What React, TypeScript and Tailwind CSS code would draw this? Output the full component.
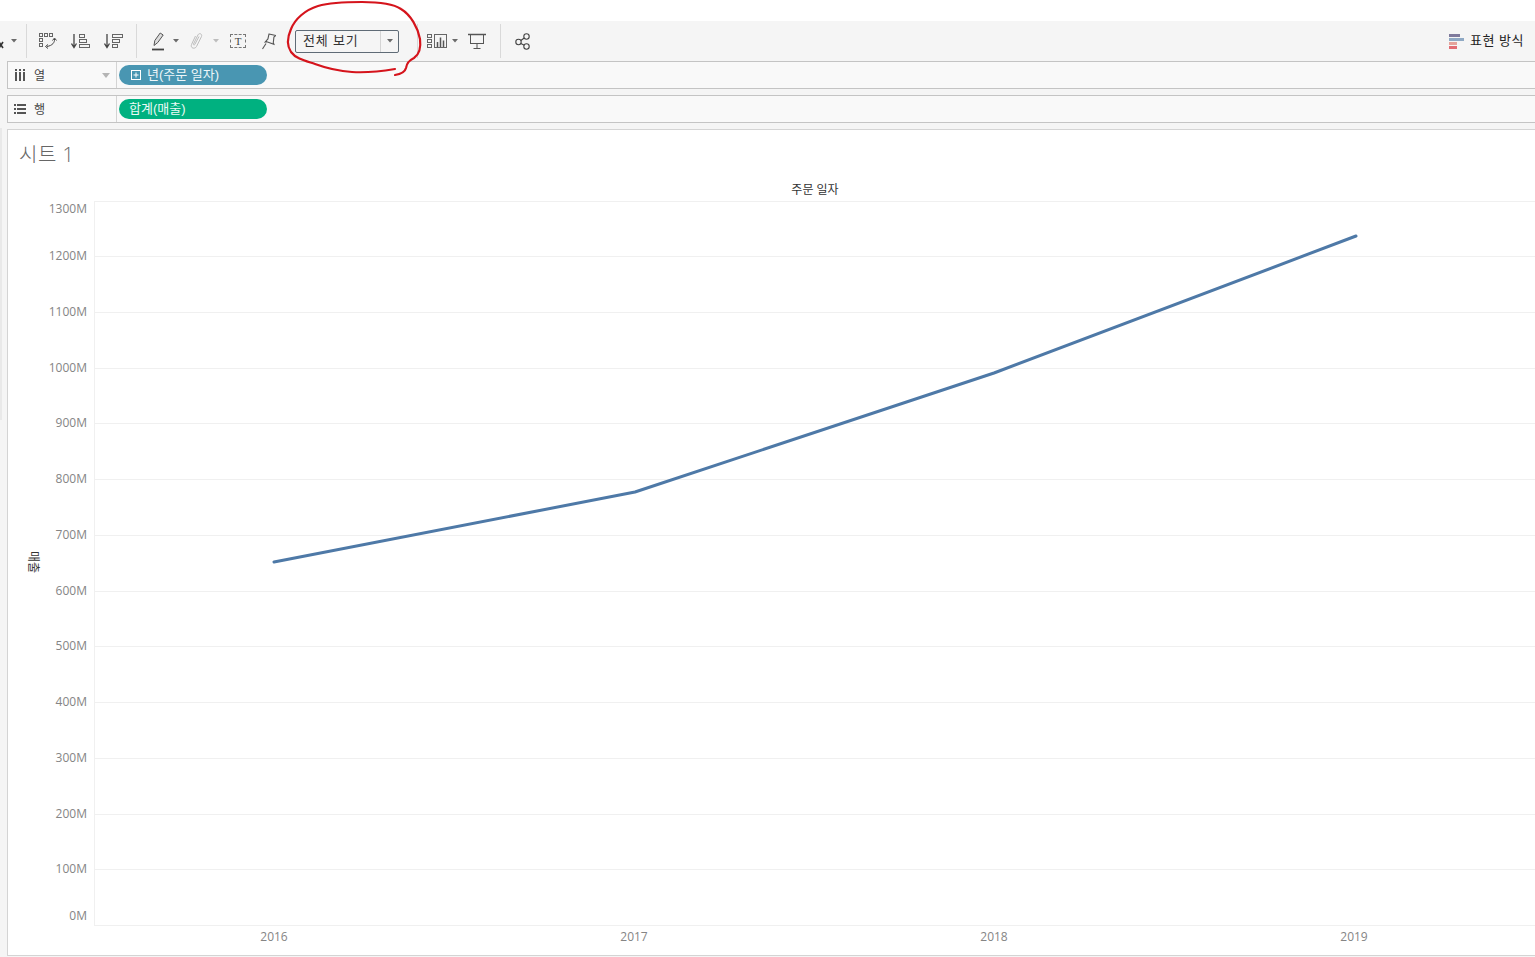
const font = "[font-family:'Liberation_Sans','Noto_Sans_CJK_KR',sans-serif]";

const yTicks = [
  { label: "1300M", grid: 201, text: 209 },
  { label: "1200M", grid: 256, text: 256 },
  { label: "1100M", grid: 312, text: 312 },
  { label: "1000M", grid: 368, text: 368 },
  { label: "900M", grid: 423, text: 423 },
  { label: "800M", grid: 479, text: 479 },
  { label: "700M", grid: 535, text: 535 },
  { label: "600M", grid: 591, text: 591 },
  { label: "500M", grid: 646, text: 646 },
  { label: "400M", grid: 702, text: 702 },
  { label: "300M", grid: 758, text: 758 },
  { label: "200M", grid: 814, text: 814 },
  { label: "100M", grid: 869, text: 869 },
  { label: "0M", grid: 925, text: 916 },
];

const years = [
  { label: "2016", x: 274 },
  { label: "2017", x: 634 },
  { label: "2018", x: 994 },
  { label: "2019", x: 1354 },
];

function Caret({ className = "" }: { className?: string }) {
  return (
    <svg width="6" height="4" viewBox="0 0 6 4" className={className}>
      <path d="M0 0h6L3 3.500z" fill="#6b6b6b" />
    </svg>
  );
}

function Divider({ className = "" }: { className?: string }) {
  return <div className={`w-px h-[34px] bg-[#d9d9d9] ${className}`} />;
}

function Cross() {
  return (
    <svg width="4" height="8" viewBox="0 0 4 8" className="mt-[8px]">
      <path d="M-1 1l4 6M3 1l-4 6" stroke="#333" strokeWidth="1.600" fill="none" />
    </svg>
  );
}

function SwapIcon() {
  return (
    <svg width="18" height="18" viewBox="0 0 18 18" fill="none" stroke="#666" strokeWidth="1">
      <rect x="0.500" y="1.500" width="3" height="3" />
      <rect x="5.500" y="1.500" width="3" height="3" />
      <rect x="10.500" y="1.500" width="3" height="3" />
      <rect x="0.500" y="6.500" width="3" height="3" />
      <rect x="0.500" y="11.500" width="3" height="3" />
      <path d="M15.500 7c.3 3.500-2 6.500-7.500 7.500" stroke="#444" />
      <path d="M9 12.500l-2.500 2 2.500 2M13.500 8.500l2-2.500 2 2.500" stroke="#444" />
    </svg>
  );
}

function SortAsc() {
  return (
    <svg width="19" height="18" viewBox="0 0 19 18" fill="none" stroke="#666" strokeWidth="1">
      <path d="M3 2v13M0.500 11.500L3 15.500l2.500-4" stroke="#444" strokeWidth="1.300" />
      <rect x="8.500" y="2.500" width="5" height="3" />
      <rect x="8.500" y="7.500" width="7" height="3" />
      <rect x="8.500" y="12.500" width="10" height="3" />
    </svg>
  );
}

function SortDesc() {
  return (
    <svg width="19" height="18" viewBox="0 0 19 18" fill="none" stroke="#666" strokeWidth="1">
      <path d="M3 2v13M0.500 11.500L3 15.500l2.500-4" stroke="#444" strokeWidth="1.300" />
      <rect x="8.500" y="2.500" width="10" height="3" />
      <rect x="8.500" y="7.500" width="7" height="3" />
      <rect x="8.500" y="12.500" width="5" height="3" />
    </svg>
  );
}

function Pen() {
  return (
    <svg width="16" height="20" viewBox="0 0 16 20" fill="none">
      <path d="M3 14.500l.8-5 5.400-7.500 3 2-5.400 7.500z" fill="#dcdcdc" stroke="#555" strokeWidth="1" />
      <path d="M1 18.500h12" stroke="#444" strokeWidth="1.800" />
    </svg>
  );
}

function Clip() {
  return (
    <svg width="14" height="18" viewBox="0 0 14 18" fill="none" stroke="#bdbdbd" strokeWidth="1">
      <path d="M4.500 12L9 2.800c1.300-2.300 4.500-.8 3.500 1.700L7.500 14.500c-1.500 3-6.500 1.800-5-2L6.500 4" />
      <path d="M4.500 12c-.5 1 .8 1.500 1.300.5L10 4.500" />
    </svg>
  );
}

function Pin() {
  return (
    <svg width="16" height="17" viewBox="0 0 16 17" fill="none" stroke="#555" strokeWidth="1.100">
      <path d="M7.500 1h7L13 3l.5 5.500 1 1.500-7.500-1-1.500.5L7.500 6z" transform="rotate(12 8 8)" />
      <path d="M6 10.500L2.500 16" />
    </svg>
  );
}

function ShowMe() {
  return (
    <svg width="21" height="16" viewBox="0 0 21 16" fill="none" stroke="#666" strokeWidth="1">
      <rect x="0.500" y="1.500" width="4" height="3" />
      <rect x="0.500" y="6.500" width="4" height="3" />
      <rect x="0.500" y="11.500" width="4" height="3" />
      <rect x="7.500" y="1.500" width="12" height="13" />
      <path d="M10.500 14V9M13.500 14V4.500M16.500 14V7.500" stroke="#555" strokeWidth="1.500" />
    </svg>
  );
}

function Present() {
  return (
    <svg width="18" height="17" viewBox="0 0 18 17" fill="none" stroke="#555" strokeWidth="1">
      <path d="M0 1.500h18" strokeWidth="1.500" />
      <rect x="2.500" y="1.500" width="13" height="9" />
      <path d="M9 10.500v5M5.500 15.500h7" />
    </svg>
  );
}

function Share() {
  return (
    <svg width="16" height="17" viewBox="0 0 16 17" fill="none" stroke="#444" strokeWidth="1.100">
      <circle cx="11.500" cy="3.500" r="2.700" />
      <circle cx="3.500" cy="9" r="2.700" />
      <circle cx="11.500" cy="13.500" r="2.700" />
      <path d="M5.800 7.500l3.500-2.500M5.800 10.400l3.500 1.900" />
    </svg>
  );
}

function ShowMeColors() {
  return (
    <svg width="15" height="15" viewBox="0 0 15 15">
      <rect x="0" y="0" width="11" height="3" fill="#7f7a9c" />
      <rect x="0" y="4" width="15" height="3" fill="#8fa9c4" />
      <rect x="0" y="8" width="8" height="3" fill="#e5a39b" />
      <rect x="0" y="12" width="8" height="3" fill="#e26d74" />
    </svg>
  );
}

function Shelf({ icon, label, caret, children }: { icon: React.ReactNode; label: string; caret?: boolean; children: React.ReactNode }) {
  return (
    <div className="flex h-[28px] border border-[#c4c4c4] border-r-0 bg-[#f9f9f9]">
      <div className="w-[109px] flex items-center border-r border-[#d4d4d4] pl-[6px] pr-[6px] gap-[8px]">
        {icon}
        <span className="text-[12px] pt-[1px] text-[#444]">{label}</span>
        {caret && (
          <svg width="8" height="5" viewBox="0 0 8 5" className="ml-auto">
            <path d="M0 0h8L4 5z" fill="#b5b5b5" />
          </svg>
        )}
      </div>
      <div className="flex items-center pl-[2px]">{children}</div>
    </div>
  );
}

export default function App() {
  return (
    <div className={`relative w-[1535px] h-[957px] overflow-hidden bg-[#f5f5f5] ${font}`}>
      <div className="h-[21px] bg-white" />

      {/* Toolbar */}
      <div className="h-[40px] flex items-center bg-[#f5f5f5] pr-[11px]">
        <Cross />
        <Caret className="ml-[7px]" />
        <Divider className="ml-[9px]" />
        <div className="ml-[12px]"><SwapIcon /></div>
        <div className="ml-[14px]"><SortAsc /></div>
        <div className="ml-[14px]"><SortDesc /></div>
        <Divider className="ml-[13px]" />
        <div className="ml-[14px]"><Pen /></div>
        <Caret className="ml-[6px]" />
        <div className="ml-[10px]"><Clip /></div>
        <Caret className="ml-[10px] opacity-40" />
        <div className="ml-[11px] w-[16px] h-[14px] border border-dashed border-[#777] flex items-center justify-center text-[11px] text-[#444] [font-family:'Liberation_Serif',serif]">T</div>
        <div className="ml-[14px]"><Pin /></div>
        <div className="ml-[19px] w-[104px] h-[23px] bg-[#f5f5f5] border border-[#5f6b76] rounded-[2px] flex items-center">
          <span className="flex-1 pl-[7px] text-[13px] text-[#333] tracking-[0.8px]">전체 보기</span>
          <div className="w-[18px] h-full border-l border-[#d4d4d4] flex items-center justify-center">
            <Caret />
          </div>
        </div>
        <Divider className="ml-[18px]" />
        <div className="ml-[9px]"><ShowMe /></div>
        <Caret className="ml-[4px]" />
        <div className="ml-[10px]"><Present /></div>
        <Divider className="ml-[14px]" />
        <div className="ml-[14px]"><Share /></div>
        <div className="ml-auto flex items-center gap-[6px]">
          <ShowMeColors />
          <span className="text-[13px] text-[#222] tracking-[0.5px]">표현 방식</span>
        </div>
      </div>

      {/* Shelves */}
      <div className="pl-[7px] flex flex-col gap-[6px]">
        <Shelf
          caret
          label="열"
          icon={
            <svg width="12" height="12" viewBox="0 0 12 12" fill="#555">
              <rect x="1" y="3" width="2" height="9" />
              <rect x="5" y="3" width="2" height="9" />
              <rect x="9" y="3" width="2" height="9" />
              <rect x="1" y="0" width="2" height="2" />
              <rect x="5" y="0" width="2" height="2" />
              <rect x="9" y="0" width="2" height="2" />
            </svg>
          }
        >
          <div className="w-[148px] h-[20px] rounded-full bg-[#4996b2] flex items-center pl-[12px] gap-[6px] text-[13px] text-[#eef6f9]">
            <svg width="10" height="10" viewBox="0 0 10 10" fill="none" stroke="#fff" strokeWidth="1">
              <rect x="0.500" y="0.500" width="9" height="9" />
              <path d="M5 2.500v5M2.500 5h5" />
            </svg>
            년(주문 일자)
          </div>
        </Shelf>
        <Shelf
          label="행"
          icon={
            <svg width="12" height="10" viewBox="0 0 12 10" fill="#555">
              <rect x="0" y="0" width="2" height="2" />
              <rect x="3" y="0" width="9" height="2" />
              <rect x="0" y="4" width="2" height="2" />
              <rect x="3" y="4" width="9" height="2" />
              <rect x="0" y="8" width="2" height="2" />
              <rect x="3" y="8" width="9" height="2" />
            </svg>
          }
        >
          <div className="w-[148px] h-[20px] rounded-full bg-[#00b180] flex items-center pl-[10px] text-[13px] text-[#eafaf5]">합계(매출)</div>
        </Shelf>
      </div>

      {/* Sheet */}
      <div className="mt-[6px] ml-[7px] h-[827px] bg-white border border-[#d4d4d4] border-r-0 pl-[11px] pt-[12px]">
        <div className="text-[20px] leading-[26px] font-light text-[#666] tracking-[0.5px] [font-family:'Open_Sans','Noto_Sans_CJK_KR',sans-serif]">시트 1</div>
      </div>

      {/* Left edge strip */}
      <div className="absolute left-0 top-[128px] w-[2px] h-[292px] bg-[#e9e9e9]" />

      {/* Chart drawing */}
      <svg width="1535" height="957" className="absolute left-0 top-0 pointer-events-none" fontFamily="'Open Sans','Noto Sans CJK KR',sans-serif">
        {yTicks.map((t) => (
          <g key={t.label}>
            <line x1="95" x2="1535" y1={t.grid + 0.5} y2={t.grid + 0.5} stroke="#f0f0f0" />
            <text x="87" y={t.text + 4} textAnchor="end" fontSize="12" fill="#858585">{t.label}</text>
          </g>
        ))}
        <line x1="94.500" x2="94.500" y1="201" y2="926" stroke="#f0f0f0" />
        {years.map((y) => (
          <text key={y.label} x={y.x} y="941" textAnchor="middle" fontSize="12" fill="#858585">{y.label}</text>
        ))}
        <text x="815" y="194" textAnchor="middle" fontSize="12" fill="#333">주문 일자</text>
        <text transform="translate(33 562) rotate(90)" textAnchor="middle" y="4" fontSize="12" fill="#333">매출</text>
        <polyline points="274,562 635,492 994,373 1356,236" fill="none" stroke="#4e79a7" strokeWidth="3" strokeLinejoin="round" strokeLinecap="round" />

        {/* Red marker circle */}
        <path
          d="M395 75C401 74 405 72 406 68C407 62 410 60 414 58C420 54 421 47 420 39C418 28 411 15 401 9C392 3 378 2 362 2C348 2 332 2 318 6C305 10 295 19 291 29C287 38 287 46 291 52C296 59 306 61 315 64C326 68 337 71 352 72C368 73 383 71 395 69"
          fill="none"
          stroke="#d5141c"
          strokeWidth="2.200"
          strokeLinecap="round"
        />
      </svg>
    </div>
  );
}
